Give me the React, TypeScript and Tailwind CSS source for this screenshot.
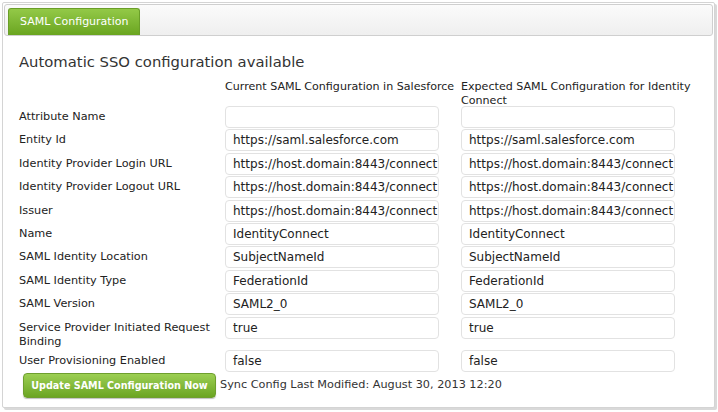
import React from "react";

const rows: { label: string; a: string; b: string; tall?: boolean }[] = [
  { label: "Attribute Name", a: "", b: "" },
  { label: "Entity Id", a: "https://saml.salesforce.com", b: "https://saml.salesforce.com" },
  { label: "Identity Provider Login URL", a: "https://host.domain:8443/connect", b: "https://host.domain:8443/connect" },
  { label: "Identity Provider Logout URL", a: "https://host.domain:8443/connect", b: "https://host.domain:8443/connect" },
  { label: "Issuer", a: "https://host.domain:8443/connect", b: "https://host.domain:8443/connect" },
  { label: "Name", a: "IdentityConnect", b: "IdentityConnect" },
  { label: "SAML Identity Location", a: "SubjectNameId", b: "SubjectNameId" },
  { label: "SAML Identity Type", a: "FederationId", b: "FederationId" },
  { label: "SAML Version", a: "SAML2_0", b: "SAML2_0" },
  { label: "Service Provider Initiated Request Binding", a: "true", b: "true", tall: true },
  { label: "User Provisioning Enabled", a: "false", b: "false" },
];

function Field({ value }: { value: string }) {
  return (
    <div className="w-[214px] h-[22px] shrink-0 rounded-[4px] border border-[#e2e2e2] bg-white pl-[7px] text-[12px] leading-[20px] text-[#222] overflow-hidden whitespace-nowrap">
      {value}
    </div>
  );
}

export default function App() {
  return (
    <div
      className="w-[718px] h-[412px] bg-white overflow-hidden text-[#222]"
      style={{ fontFamily: '"DejaVu Sans", Verdana, sans-serif' }}
    >
      <div className="ml-[2px] mt-[2px] w-[713px] h-[406px] border border-[#d4d4d4] rounded-[2px] shadow-[2px_2px_0_#d9d9d9] bg-white">
        <div className="mx-[1px] mt-[1px] h-[32px] rounded-[3px] border border-[#cfcfcf] bg-gradient-to-b from-[#fbfbfb] to-[#efefef] flex items-end pl-[3px]">
          <div className="w-[132px] h-[27px] rounded-t-[3px] bg-gradient-to-b from-[#93c947] to-[#6aa51f] border border-[#6a9e28] border-b-0 text-white text-[11px] leading-[26px] pl-[11px] whitespace-nowrap">
            SAML Configuration
          </div>
        </div>
        <div className="pl-[16px] pt-[16px]">
          <div className="text-[14.8px] leading-[20px] text-[#333]">Automatic SSO configuration available</div>
          <div className="flex mt-[8px] text-[11.1px] leading-[14px] h-[26px]">
            <div className="w-[206px] shrink-0" />
            <div className="w-[236px] shrink-0 whitespace-nowrap">Current SAML Configuration in Salesforce</div>
            <div className="w-[252px] shrink-0">Expected SAML Configuration for Identity Connect</div>
          </div>
          <div className="flex flex-col gap-y-[1.4px]">
            {rows.map((r) => (
              <div key={r.label} className="flex items-start">
                <div className="w-[206px] shrink-0 text-[11.25px] leading-[14px] pt-[4px] pr-[10px]">
                  {r.label}
                </div>
                <Field value={r.a} />
                <div className="w-[22px] shrink-0" />
                <Field value={r.b} />
              </div>
            ))}
          </div>
          <div className="flex items-center mt-[1px] ml-[4px]">
            <div className="w-[193px] h-[25px] shrink-0 rounded-[4px] bg-gradient-to-b from-[#9ccf52] to-[#6ba521] border border-[#6e9f2e] shadow-[0_1px_1px_rgba(0,0,0,0.25)] text-white font-bold text-[9.6px] leading-[23px] text-center whitespace-nowrap">
              Update SAML Configuration Now
            </div>
            <div className="ml-[4px] text-[11.25px] text-[#333] whitespace-nowrap">Sync Config Last Modified: August 30, 2013 12:20</div>
          </div>
        </div>
      </div>
    </div>
  );
}
